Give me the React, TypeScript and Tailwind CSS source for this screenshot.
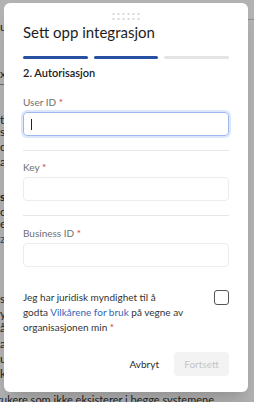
import React from "react";

const bgLines: { text: string; top: number; blue?: boolean; bold?: boolean }[] = [
  { text: "un konto", top: 19 },
  { text: "x", top: 66 },
  { text: "tilgang til", top: 112 },
  { text: "synkronisering", top: 124 },
  { text: "companies", top: 139 },
  { text: "ailer", top: 154 },
  { text: "samsvar", top: 189, bold: true },
  { text: "contact", top: 204 },
  { text: "erstatter", top: 216 },
  { text: "zendesk", top: 231, blue: true },
  { text: "s, og", top: 291 },
  { text: "ytterligere", top: 306 },
  { text: "å endre", top: 320 },
  { text: "ai", top: 336 },
  { text: "uke", top: 351 },
  { text: "kunde", top: 366 },
];

function Field({ label, focused }: { label: string; focused?: boolean }) {
  return (
    <div>
      <p className="text-[10px] leading-[16px] text-[#6f6f6f]">
        {label} <span className="text-[#c8323f]">*</span>
      </p>
      <div
        className={
          focused
            ? "mt-[2px] flex h-[24px] items-center rounded-[4px] border border-[#9fb9ee] pl-[7px] ring-2 ring-[#dde7fb]"
            : "mt-[2px] h-[24px] rounded-[4px] border border-[#ececec]"
        }
      >
        {focused && <span className="h-[11px] w-px bg-[#222]" />}
      </div>
    </div>
  );
}

export default function App() {
  return (
    <div className="relative h-[402px] w-[254px] overflow-hidden bg-white font-['Lato','Noto_Sans',sans-serif]">
      {/* page behind the dialog */}
      {bgLines.map((l) => (
        <p
          key={l.top}
          style={{ top: l.top }}
          className={`absolute left-0 whitespace-nowrap text-[12px] leading-[15px] ${l.blue ? "text-[#3566b8]" : "text-[#333]"} ${l.bold ? "font-bold" : ""}`}
        >
          {l.text}
        </p>
      ))}
      <div className="absolute left-0 top-[84px] h-px w-[20px] bg-[#999]" />
      <div className="absolute right-0 top-[19px] h-px w-[20px] bg-[#ccc]" />
      <p className="absolute left-[-3px] top-[393px] whitespace-nowrap text-[11px] leading-[14px] text-[#333]">
        rukere som ikke eksisterer i begge systemene.
      </p>
      <div className="absolute inset-0 bg-black/30" />

      {/* dialog */}
      <div className="absolute left-[4px] top-[3px] h-[389px] w-[244px] rounded-[6px] bg-white px-[19px] pt-[19px] shadow-xl">
        <div className="absolute left-1/2 top-[10px] grid -translate-x-1/2 grid-cols-6 gap-[3px]">
          {Array.from({ length: 12 }).map((_, i) => (
            <span key={i} className="h-[2px] w-[2px] bg-[#d9d9d9]" />
          ))}
        </div>

        <h2 className="text-[15px] leading-[20px] text-[#1d1d1d]">Sett opp integrasjon</h2>

        <div className="mt-[14px] flex gap-[6px]">
          <div className="h-[3px] flex-1 rounded-full bg-[#2750a3]" />
          <div className="h-[3px] flex-1 rounded-full bg-[#2750a3]" />
          <div className="h-[3px] flex-1 rounded-full bg-[#e4e4e4]" />
        </div>

        <p className="mt-[6px] text-[11px] font-semibold leading-[16px] text-[#222]">2. Autorisasjon</p>

        <div className="mt-[13px]">
          <Field label="User ID" focused />
        </div>
        <div className="mt-[14px] h-px bg-[#e6e6e6]" />
        <div className="mt-[8px]">
          <Field label="Key" />
        </div>
        <div className="mt-[14px] h-px bg-[#e6e6e6]" />
        <div className="mt-[9px]">
          <Field label="Business ID" />
        </div>

        <div className="mt-[23px] flex items-start justify-between">
          <p className="whitespace-nowrap text-[10px] leading-[15px] text-[#333]">
            Jeg har juridisk myndighet til å
            <br />
            godta <span className="text-[#3566b8]">Vilkårene for bruk</span> på vegne av
            <br />
            organisasjonen min <span className="text-[#c8323f]">*</span>
          </p>
          <span className="h-[15px] w-[15px] shrink-0 rounded-[3px] border-[1.5px] border-[#555]" />
        </div>

        <div className="mt-[17px] flex items-center justify-end">
          <span className="mr-[15px] text-[10px] text-[#2b2b2b]">Avbryt</span>
          <span className="flex h-[24px] w-[55px] items-center justify-center rounded-[4px] bg-[#f3f3f3] text-[10px] text-[#c6c6c6]">
            Fortsett
          </span>
        </div>
      </div>
    </div>
  );
}
